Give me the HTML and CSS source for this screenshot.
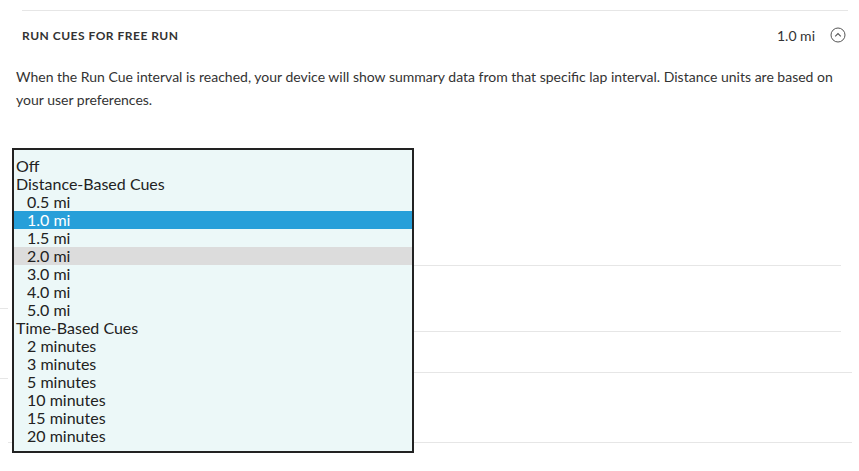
FILE: index.html
```html
<!DOCTYPE html>
<html lang="en">
<head>
    <meta charset="UTF-8">
    <meta name="viewport" content="width=device-width, initial-scale=1.0">
    <title>Run Cues</title>
    <link rel="stylesheet" href="styles.css">
</head>
<body>

<div class="settings">
    <div class="divider"></div>

    <div class="cue-header">
        <span class="cue-title">Run Cues for Free Run</span>
        <span class="cue-value">1.0 mi</span>
        <svg class="cue-toggle" width="16" height="16" viewBox="0 0 16 16">
            <circle cx="8" cy="8" r="7" fill="none" stroke="#555" stroke-width="1"/>
            <path d="M5.2 9.4 L8 6.6 L10.8 9.4" fill="none" stroke="#555" stroke-width="1.1"/>
        </svg>
    </div>

    <p class="cue-desc">When the Run Cue interval is reached, your device will show summary data from that specific lap interval. Distance units are based on your user preferences.</p>

    <div class="picker">
        <!-- open dropdown list -->
        <div class="cue-menu">
            <div class="group">Off</div>
            <div class="group">Distance-Based Cues</div>
            <div class="option">0.5 mi</div>
            <div class="option selected">1.0 mi</div>
            <div class="option">1.5 mi</div>
            <div class="option hover">2.0 mi</div>
            <div class="option">3.0 mi</div>
            <div class="option">4.0 mi</div>
            <div class="option">5.0 mi</div>
            <div class="group">Time-Based Cues</div>
            <div class="option">2 minutes</div>
            <div class="option">3 minutes</div>
            <div class="option">5 minutes</div>
            <div class="option">10 minutes</div>
            <div class="option">15 minutes</div>
            <div class="option">20 minutes</div>
        </div>
    </div>

    <!-- rows behind the dropdown -->
    <div class="rows">
        <div class="rule rule-a"></div>
        <div class="stub stub-a"></div>
        <div class="rule rule-b"></div>
        <div class="rule rule-c"></div>
        <div class="stub stub-b"></div>
        <div class="rule rule-d"></div>
    </div>
</div>

</body>
</html>
```

FILE: styles.css
```css
/* Global Styles */
body {
    margin: 0;
    background: #fff;
    font-family: 'Lato', 'Liberation Sans', sans-serif;
    color: #333;
}

.settings {
    width: 859px;
    padding-bottom: 28px;
}

/* Top divider */
.divider {
    height: 1px;
    margin: 10px 11px 0 22px;
    background: #e6e6e6;
}

/* Header row */
.cue-header {
    display: flex;
    align-items: center;
    height: 48px;
    padding: 0 13px 0 22px;
}

.cue-title {
    flex: 1;
    font-size: 12px;
    font-weight: 700;
    text-transform: uppercase;
    color: #333;
    letter-spacing: 0.5px;
}

.cue-value {
    font-size: 14px;
    margin-right: 15px;
}

.cue-toggle {
    display: block;
}

/* Description */
.cue-desc {
    margin: 6px 0 0;
    padding: 0 16px;
    font-size: 14px;
    line-height: 23px;
}

/* Dropdown */
.picker {
    position: relative;
    height: 37px;
}

.cue-menu {
    position: absolute;
    top: 37px;
    left: 12px;
    z-index: 2;
    width: 398px;
    padding: 7px 0 6px;
    background: #ecf8f8;
    border: 2px solid #222;
    font-size: 16px;
    color: #222;
}

.group,
.option {
    height: 18px;
    line-height: 18px;
    white-space: nowrap;
}

.group {
    padding-left: 2px;
}

.option {
    padding-left: 13px;
}

.option.selected {
    background: #279fd9;
    color: #fff;
}

.option.hover {
    background: #dcdcdc;
}

/* Background rows */
.rule {
    height: 1px;
    background: #e6e6e6;
}

.rule-a {
    margin: 117px 18px 0 22px;
}

.rule-b {
    margin: 22px 18px 0 22px;
}

.rule-c {
    margin: 40px 7px 0 22px;
}

.rule-d {
    margin: 63px 7px 0 8px;
}

.stub {
    width: 8px;
    height: 1px;
    background: #e6e6e6;
}

.stub-a {
    margin-top: 42px;
}

.stub-b {
    margin-top: 5px;
}
```
